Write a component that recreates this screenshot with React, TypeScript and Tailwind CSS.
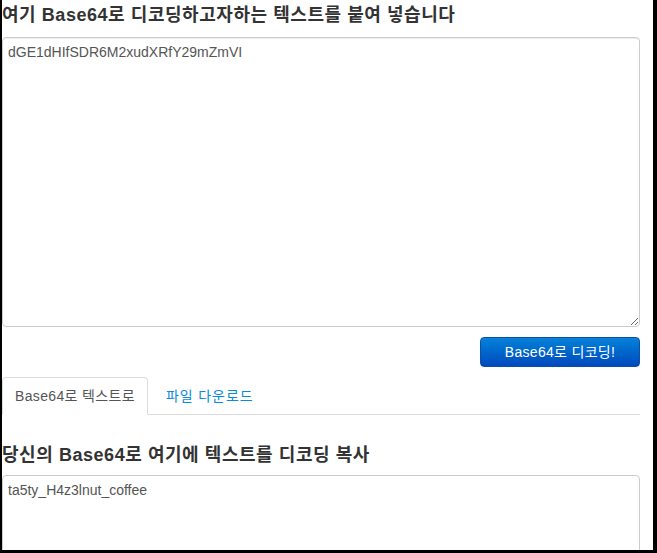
import React, { useState } from 'react';

const FONT = '"Liberation Sans", Arial, "Noto Sans CJK KR", sans-serif';

const App = () => {
  const [input, setInput] = useState<string>('dGE1dHIfSDR6M2xudXRfY29mZmVI');
  const [tab, setTab] = useState<'text' | 'file'>('text');

  return (
    <div
      className="w-[657px] h-[553px] overflow-hidden bg-white border-l-2 border-r-4 border-b-[3px] border-black text-[#333]"
      style={{ fontFamily: FONT }}
    >
      <div className="w-[638px]">
        <h2 className="text-[18px] font-bold leading-[20px] tracking-[0.55px] pt-[5px] h-[37px]">
          여기 Base64로 디코딩하고자하는 텍스트를 붙여 넣습니다
        </h2>
        <textarea
          value={input}
          onChange={(e) => setInput(e.target.value)}
          className="block w-full h-[290px] border border-[#ccc] rounded-[4px] px-[5px] py-[4px] text-[14px] leading-[20px] text-[#555] shadow-[inset_0_1px_1px_rgba(0,0,0,0.075)] outline-none"
        />
        <div className="flex justify-end mt-[10px]">
          <button className="w-[160px] h-[30px] rounded-[4px] border border-[#0a4fa8] bg-gradient-to-b from-[#0a82d8] to-[#0048bd] text-white text-[14px] tracking-[0.3px] leading-none">
            Base64로 디코딩!
          </button>
        </div>
        <div className="flex mt-[10px] border-b border-[#ddd] h-[38px]">
          <button
            onClick={() => setTab('text')}
            className={`px-[12px] h-[38px] -mb-px text-[14px] tracking-[0.35px] rounded-t-[4px] border ${
              tab === 'text'
                ? 'border-[#ddd] border-b-white bg-white text-[#555]'
                : 'border-transparent text-[#0a8ad8]'
            }`}
          >
            Base64로 텍스트로
          </button>
          <button
            onClick={() => setTab('file')}
            className={`ml-[2px] px-[15px] h-[38px] -mb-px text-[14px] tracking-[0.9px] rounded-t-[4px] border ${
              tab === 'file'
                ? 'border-[#ddd] border-b-white bg-white text-[#555]'
                : 'border-transparent text-[#0a8ad8]'
            }`}
          >
            파일 다운로드
          </button>
        </div>
        <h2 className="text-[18px] font-bold leading-[20px] tracking-[0.55px] mt-[30px] h-[30px]">
          당신의 Base64로 여기에 텍스트를 디코딩 복사
        </h2>
        <textarea
          readOnly
          value="ta5ty_H4z3lnut_coffee"
          className="block w-full h-[200px] border border-[#ccc] rounded-[4px] px-[5px] py-[4px] text-[14px] leading-[20px] text-[#555] outline-none"
        />
      </div>
    </div>
  );
};

export default App;
